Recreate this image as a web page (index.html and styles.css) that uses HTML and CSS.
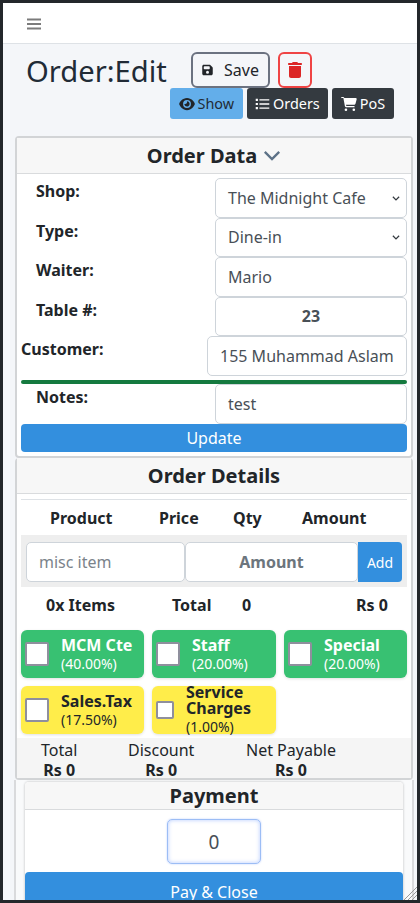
FILE: index.html
```html
<!DOCTYPE html>
<html lang="en">
<head>
    <meta charset="UTF-8">
    <meta name="viewport" content="width=device-width, initial-scale=1.0">
    <title>Order:Edit</title>
    <link rel="stylesheet" href="styles.css">
</head>
<body>
<div class="frame">
    <nav class="topbar">
        <svg class="burger" viewBox="0 0 14 12" width="14" height="12"><path d="M0 0.5h14v2H0zM0 5h14v2H0zM0 9.5h14v2H0z" fill="#7b7b7b"/></svg>
    </nav>

    <header class="page-head">
        <div class="title-row">
            <h1>Order:Edit</h1>
            <button class="btn-save">
                <svg viewBox="0 0 448 512" width="11" height="12"><path fill="#212529" d="M64 32C29 32 0 61 0 96v320c0 35 29 64 64 64h320c35 0 64-29 64-64V173c0-17-7-33-19-45l-77-77c-12-12-28-19-45-19H64zm0 96c0-18 14-32 32-32h192c18 0 32 14 32 32v64c0 18-14 32-32 32H96c-18 0-32-14-32-32v-64zm160 160a64 64 0 1 1 0 128 64 64 0 1 1 0-128z"/></svg>
                <span>Save</span>
            </button>
            <button class="btn-trash">
                <svg viewBox="0 0 448 512" width="14" height="16"><path fill="#dc2626" d="M135 18c5-11 16-18 29-18h120c13 0 24 7 29 18l7 14h96c18 0 32 14 32 32s-14 32-32 32H32C14 96 0 82 0 64s14-32 32-32h96l7-14zM32 128h384v320c0 35-29 64-64 64H96c-35 0-64-29-64-64V128z"/></svg>
            </button>
        </div>
        <div class="action-row">
            <a class="btn-act btn-show">
                <svg viewBox="0 0 576 512" width="16" height="14"><path fill="#212529" d="M288 32c-81 0-146 37-193 81C48 156 17 208 2 244c-3 8-3 17 0 25 15 36 46 88 93 131 47 44 112 81 193 81s146-37 193-81c47-43 78-95 93-131 3-8 3-17 0-25-15-36-46-88-93-131-47-44-112-81-193-81zM144 256a144 144 0 1 1 288 0 144 144 0 1 1-288 0zm144-64c0 35-29 64-64 64-7 0-14-1-20-3-6-2-12 1-12 7 0 6 1 11 2 16 14 51 67 82 118 68s82-67 68-118c-11-41-48-69-88-71-6 0-9 6-7 12 2 8 3 17 3 25z"/></svg>
                Show
            </a>
            <a class="btn-act btn-dark">
                <svg viewBox="0 0 512 512" width="15" height="14"><path fill="#fff" d="M8 64h80v80H8zM144 80h360v48H144zM8 216h80v80H8zM144 232h360v48H144zM8 368h80v80H8zM144 384h360v48H144z"/></svg>
                Orders
            </a>
            <a class="btn-act btn-dark">
                <svg viewBox="0 0 576 512" width="16" height="14"><path fill="#fff" d="M0 24C0 11 11 0 24 0h45c22 0 41 12 51 32h411c26 0 45 25 38 50l-41 153c-8 28-33 47-62 47H177l5 29c2 11 12 19 24 19h266c13 0 24 11 24 24s-11 24-24 24H206c-35 0-65-25-71-59L84 44c-1-4-4-4-7-4H24C11 48 0 37 0 24zm128 440a48 48 0 1 1 96 0 48 48 0 1 1-96 0zm336-48a48 48 0 1 1 0 96 48 48 0 1 1 0-96z"/></svg>
                PoS
            </a>
        </div>
    </header>

    <section class="card card-main">
        <div class="card-head">Order Data <svg class="chev" viewBox="0 0 20 12" width="18" height="11"><path d="M2 2l8 8 8-8" fill="none" stroke="#5d7287" stroke-width="2.6"/></svg></div>
        <div class="order-form">
            <div class="form-row">
                <label>Shop:</label>
                <div class="field select">The Midnight Cafe<svg viewBox="0 0 16 16" width="10" height="10"><path d="M3 6l5 5 5-5" fill="none" stroke="#343a40" stroke-width="2"/></svg></div>
            </div>
            <div class="form-row">
                <label>Type:</label>
                <div class="field select">Dine-in<svg viewBox="0 0 16 16" width="10" height="10"><path d="M3 6l5 5 5-5" fill="none" stroke="#343a40" stroke-width="2"/></svg></div>
            </div>
            <div class="form-row">
                <label>Waiter:</label>
                <div class="field">Mario</div>
            </div>
            <div class="form-row">
                <label>Table #:</label>
                <div class="field field-num">23</div>
            </div>
            <div class="form-row row-customer">
                <label>Customer:</label>
                <div class="field">155 Muhammad Aslam</div>
            </div>
            <div class="green-line"></div>
            <div class="form-row row-notes">
                <label>Notes:</label>
                <div class="field">test</div>
            </div>
            <button class="btn-update">Update</button>
        </div>
    </section>

    <section class="card card-main card-details">
        <div class="card-head">Order Details</div>
        <div class="details-body">
            <div class="thin-rule"></div>
            <div class="col-head">
                <span class="c-product">Product</span>
                <span class="c-price">Price</span>
                <span class="c-qty">Qty</span>
                <span class="c-amount">Amount</span>
            </div>
            <div class="add-band">
                <div class="field misc">misc item</div>
                <div class="field amount">Amount</div>
                <button class="btn-add">Add</button>
            </div>
            <div class="col-total">
                <span class="c-items">0x Items</span>
                <span class="c-total">Total</span>
                <span class="c-count">0</span>
                <span class="c-rs">Rs 0</span>
            </div>
            <div class="chips">
                <div class="chip green"><i class="box"></i><div><b>MCM Cte</b><small>(40.00%)</small></div></div>
                <div class="chip green"><i class="box"></i><div><b>Staff</b><small>(20.00%)</small></div></div>
                <div class="chip green"><i class="box"></i><div><b>Special</b><small>(20.00%)</small></div></div>
                <div class="chip yellow"><i class="box"></i><div><b>Sales.Tax</b><small>(17.50%)</small></div></div>
                <div class="chip yellow chip-long"><i class="box box-sm"></i><div><b>Service Charges</b><small>(1.00%)</small></div></div>
            </div>
        </div>
        <div class="totals">
            <div class="t-total">Total<b>Rs 0</b></div>
            <div class="t-discount">Discount<b>Rs 0</b></div>
            <div class="t-net">Net Payable<b>Rs 0</b></div>
        </div>
    </section>

    <div class="pay-wrap">
        <section class="card card-pay">
            <div class="card-head">Payment</div>
            <div class="pay-body">
                <div class="pay-input">0</div>
                <button class="btn-pay">Pay &amp; Close</button>
            </div>
        </section>
    </div>

    <svg class="grip" viewBox="0 0 14 14" width="14" height="14"><path d="M14 1L1 14M14 5L5 14M14 9L9 14" stroke="#9a9a9a" fill="none"/></svg>
</div>
</body>
</html>
```

FILE: styles.css
```css
* { box-sizing: border-box; }
html, body { margin: 0; height: 100%; background: #222; }
body { font-family: "Noto Sans", "Open Sans", sans-serif; font-size: 16px; color: #212529; overflow: hidden; }
button { font-family: inherit; border: none; }
svg { display: block; flex: none; }

.frame { position: relative; width: 420px; height: 903px; border: 3px solid #23272b; background: #f4f6f9; overflow: hidden; }

.topbar { height: 41px; background: #fff; border-bottom: 1px solid #dee2e6; padding: 15px 0 0 24px; }

.page-head { height: 92px; padding: 8px 23px 0 23px; }
.title-row { display: flex; align-items: flex-start; height: 36px; }
h1 { margin: 0; font-size: 29.2px; font-weight: 400; line-height: 38px; color: #212b36; width: 165px; }
.btn-save { display: flex; align-items: center; gap: 11px; width: 79px; height: 36px; padding: 0 0 0 9px; margin-right: 8px; background: transparent; border: 2px solid #6b7280; border-radius: 6px; font-size: 16px; color: #212529; }
.btn-trash { display: flex; align-items: center; justify-content: center; width: 34px; height: 36px; padding: 0; background: transparent; border: 2px solid #ef4444; border-radius: 6px; }
.action-row { display: flex; gap: 4px; margin-left: 144px; }
.btn-act { display: flex; align-items: center; gap: 3px; height: 31px; padding: 0 8.5px; border-radius: 3px; font-size: 14.4px; }
.btn-show { background: #63aeea; color: #212b36; }
.btn-dark { background: #343a40; color: #fff; }

.card { background: #fff; border-radius: 4px; }
.card-main { width: 398px; margin-left: 12px; border: 2px solid #d2d4d6; }
.card-head { display: flex; justify-content: center; align-items: center; gap: 6px; height: 36px; background: #f7f7f7; border-bottom: 1px solid #d9dbdd; font-size: 20px; font-weight: 700; color: #212529; }

.order-form { padding: 4px; }
.form-row { display: flex; height: 39.5px; padding-left: 15px; }
.form-row label { flex: 1; font-size: 16px; font-weight: 700; line-height: 26px; }
.field { border: 1px solid #ced4da; border-radius: 5px; background: #fff; color: #495057; font-size: 16px; }
.form-row .field { display: flex; align-items: center; justify-content: space-between; width: 192px; height: 39.5px; padding: 0 12px; }
.form-row .select svg { margin-right: -7px; }
.form-row .field-num { justify-content: center; font-weight: 700; }
.row-customer { padding-left: 0; height: 40px; }
.row-customer .field { width: 200px; height: 40px; padding: 0 12px; white-space: nowrap; }
.green-line { height: 4px; margin-top: 4px; background: #157a3f; border-radius: 2px; }
.row-notes { height: 40px; }
.form-row.row-notes .field { height: 40px; }
.btn-update { display: block; width: 100%; height: 28px; padding: 0; background: #338fde; color: #fff; font-size: 16px; border-radius: 4px; }

.card-details { border-top: 0; height: 322px; border-bottom: 2px solid #d2d4d6; }
.details-body { padding: 5px 4px 0; }
.thin-rule { height: 1px; background: #dee2e6; }
.col-head { position: relative; height: 35px; font-size: 16px; font-weight: 700; }
.col-head span, .col-total span { position: absolute; top: 6px; line-height: 24px; }
.c-product { left: 29px; }
.c-price { left: 138px; }
.c-qty { left: 212px; }
.c-amount { left: 281px; }
.add-band { display: flex; align-items: center; height: 52px; padding: 2px 5px 0; background: #eee; }
.add-band .field { height: 40px; display: flex; align-items: center; }
.misc { width: 159px; padding-left: 12px; color: #7b838b; }
.amount { width: 173px; justify-content: center; font-weight: 700; color: #6c757d; }
.btn-add { width: 44px; height: 40px; padding: 0; background: #338fde; color: #fff; font-size: 14px; border-radius: 0 4px 4px 0; }
.col-total { position: relative; height: 43px; font-size: 16px; font-weight: 700; }
.c-items { left: 25px; }
.c-total { left: 151px; }
.c-count { left: 221px; }
.c-rs { left: 335px; }

.chips { display: grid; grid-template-columns: 123px 124px 123px; column-gap: 8px; row-gap: 8px; }
.chip { display: flex; align-items: center; height: 48px; border-radius: 6px; box-shadow: 0 1px 3px rgba(0,0,0,.12); }
.chip b { display: block; font-size: 16px; line-height: 19px; }
.chip small { display: block; font-size: 14px; line-height: 18px; }
.green { background: #38c172; color: #fff; }
.yellow { background: #ffed4a; color: #212529; }
.box { flex: none; width: 24px; height: 24px; margin: 0 12px 0 4px; background: #fff; border: 2px solid #8f8f9d; border-radius: 2px; }
.box-sm { width: 18px; height: 18px; }
.chip-long b { line-height: 16px; }
.chip-long small { margin-top: 2px; }

.totals { position: relative; height: 40px; margin-top: 4px; background: #f5f5f5; font-size: 16px; line-height: 20px; }
.totals div { position: absolute; top: 2px; text-align: center; }
.totals b { display: block; font-size: 16px; line-height: 20px; }
.t-total { left: 24px; }
.t-discount { left: 111px; }
.t-net { left: 229px; }

.pay-wrap { width: 400px; height: 200px; margin-left: 11px; padding: 2px 0 0 9px; background: #f9fafb; border: solid #d9dadc; border-width: 0 2px; }
.card-pay { width: 378px; box-shadow: 0 0 2px 1px rgba(0,0,0,.12); }
.card-pay .card-head { height: 28px; border-radius: 4px 4px 0 0; }
.pay-body { padding: 9px 0 0; }
.pay-input { width: 94px; height: 45px; margin: 0 auto; display: flex; align-items: center; justify-content: center; border: 1px solid #9cbdf5; border-radius: 5px; box-shadow: inset 0 0 4px rgba(90,140,255,.45), 0 0 2px rgba(90,140,255,.4); color: #495057; font-size: 19px; }
.btn-pay { display: block; width: 100%; height: 40px; margin-top: 8px; padding: 0; background: #338fde; color: #fff; font-size: 16px; border-radius: 4px 4px 0 0; }

.grip { position: absolute; right: 0; bottom: 0; }
```
